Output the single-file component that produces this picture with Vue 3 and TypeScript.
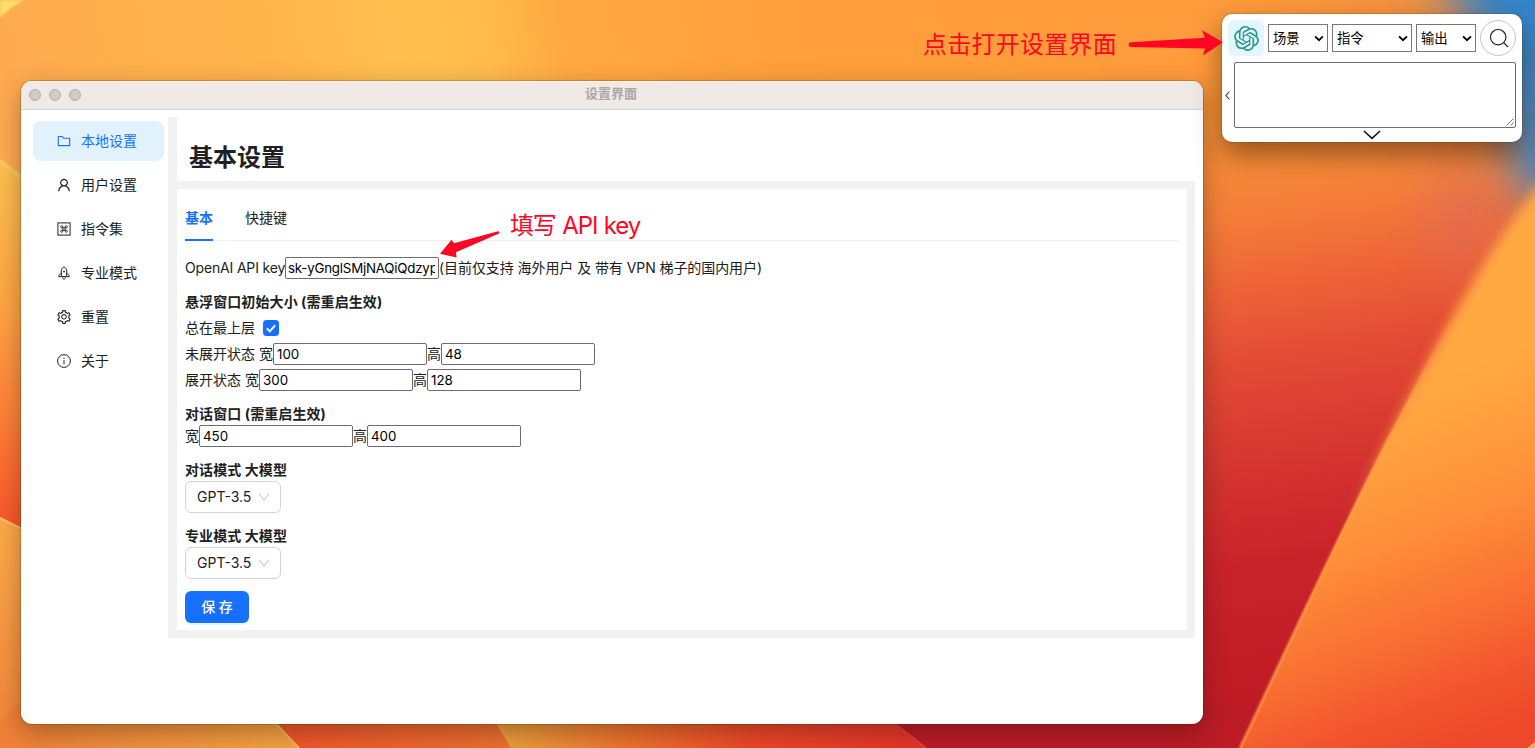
<script setup lang="ts">
import { ref } from 'vue'

interface MenuItem { key: string; label: string; icon: string }

const menu: MenuItem[] = [
  { key: 'local', label: '本地设置', icon: 'folder' },
  { key: 'user', label: '用户设置', icon: 'user' },
  { key: 'commands', label: '指令集', icon: 'command' },
  { key: 'pro', label: '专业模式', icon: 'rocket' },
  { key: 'reset', label: '重置', icon: 'gear' },
  { key: 'about', label: '关于', icon: 'info' },
]
const activeMenu = ref('local')
const tabs = ['基本', '快捷键']
const activeTab = ref('基本')

const apiKey = ref('sk-yGnglSMjNAQiQdzypLwTk')
const alwaysOnTop = ref(true)
const sizes = ref({ foldW: '100', foldH: '48', openW: '300', openH: '128', chatW: '450', chatH: '400' })
const pickers = [
  { label: '场景', size: 'small' },
  { label: '指令', size: 'large' },
  { label: '输出', size: 'small' },
]
const prompt = ref('')
</script>

<template>
  <div class="desktop">
    <svg class="wallpaper" viewBox="0 0 1535 748" preserveAspectRatio="none">
      <defs>
        <linearGradient id="top" x1="0" x2="1535" y1="0" y2="0" gradientUnits="userSpaceOnUse" gradientTransform="rotate(-8)">
          <stop offset="0" stop-color="#ffaa50" />
          <stop offset=".08" stop-color="#ffb04b" />
          <stop offset=".16" stop-color="#ffb34b" />
          <stop offset=".26" stop-color="#ffc04f" />
          <stop offset=".31" stop-color="#ffbb4b" />
          <stop offset=".36" stop-color="#ffa941" />
          <stop offset=".5" stop-color="#ff9f3b" />
          <stop offset=".8" stop-color="#ff9b3b" />
          <stop offset="1" stop-color="#ef8a44" />
        </linearGradient>
        <linearGradient id="red" x1="1203" x2="1290" y1="120" y2="700" gradientUnits="userSpaceOnUse">
          <stop offset="0" stop-color="#fb9038" />
          <stop offset=".16" stop-color="#f48039" />
          <stop offset=".3" stop-color="#ed6237" />
          <stop offset=".42" stop-color="#e34b35" />
          <stop offset=".58" stop-color="#d63731" />
          <stop offset=".76" stop-color="#c9232a" />
          <stop offset="1" stop-color="#c01a26" />
        </linearGradient>
        <linearGradient id="redFade" x1="0" x2="0" y1="60" y2="190" gradientUnits="userSpaceOnUse">
          <stop offset="0" stop-color="#fff" stop-opacity="0" />
          <stop offset="1" stop-color="#fff" />
        </linearGradient>
        <mask id="redMask"><rect width="1535" height="748" fill="url(#redFade)" /></mask>
        <linearGradient id="petal" x1="1390" x2="1515" y1="400" y2="725" gradientUnits="userSpaceOnUse">
          <stop offset="0" stop-color="#ffa943" />
          <stop offset=".35" stop-color="#ff913a" />
          <stop offset=".62" stop-color="#f97333" />
          <stop offset=".85" stop-color="#f2552e" />
          <stop offset="1" stop-color="#ed482b" />
        </linearGradient>
        <linearGradient id="left" x1="0" x2="0" y1="165" y2="525" gradientUnits="userSpaceOnUse">
          <stop offset="0" stop-color="#fec04e" />
          <stop offset=".4" stop-color="#ffa544" />
          <stop offset=".7" stop-color="#ff8038" />
          <stop offset="1" stop-color="#fb572b" />
        </linearGradient>
        <linearGradient id="leftLow" x1="0" x2="0" y1="520" y2="748" gradientUnits="userSpaceOnUse">
          <stop offset="0" stop-color="#ffab49" />
          <stop offset="1" stop-color="#ef843b" />
        </linearGradient>
        <linearGradient id="lowA" x1="0" x2="290" y1="0" y2="0" gradientUnits="userSpaceOnUse">
          <stop offset="0" stop-color="#f08039" />
          <stop offset="1" stop-color="#f7a444" />
        </linearGradient>
        <linearGradient id="lowB" x1="280" x2="510" y1="0" y2="0" gradientUnits="userSpaceOnUse">
          <stop offset="0" stop-color="#f2562c" />
          <stop offset="1" stop-color="#ef7133" />
        </linearGradient>
        <linearGradient id="lowC" x1="496" x2="920" y1="0" y2="0" gradientUnits="userSpaceOnUse">
          <stop offset="0" stop-color="#eda441" />
          <stop offset=".3" stop-color="#f0752f" />
          <stop offset=".6" stop-color="#ee482a" />
          <stop offset="1" stop-color="#e7352a" />
        </linearGradient>
        <filter id="b1"><feGaussianBlur stdDeviation="1" /></filter>
        <filter id="b5" x="-20%" y="-20%" width="140%" height="140%"><feGaussianBlur stdDeviation="6" /></filter>
        <filter id="b25" x="-60%" y="-60%" width="220%" height="220%"><feGaussianBlur stdDeviation="24" /></filter>
        <linearGradient id="softFade" x1="0" x2="0" y1="440" y2="520" gradientUnits="userSpaceOnUse">
          <stop offset="0" stop-color="#fff" />
          <stop offset="1" stop-color="#fff" stop-opacity="0" />
        </linearGradient>
        <mask id="softMask" maskUnits="userSpaceOnUse" x="1100" y="0" width="500" height="748"><rect x="1100" width="500" height="748" fill="url(#softFade)" /></mask>
        <linearGradient id="sharpFade" x1="0" x2="0" y1="300" y2="440" gradientUnits="userSpaceOnUse">
          <stop offset="0" stop-color="#fff" stop-opacity="0" />
          <stop offset="1" stop-color="#fff" />
        </linearGradient>
        <mask id="sharpMask" maskUnits="userSpaceOnUse" x="1100" y="0" width="500" height="748"><rect x="1100" width="500" height="748" fill="url(#sharpFade)" /></mask>
      </defs>
      <rect width="1535" height="748" fill="url(#top)" />
      <g mask="url(#redMask)"><rect x="1100" width="435" height="748" fill="url(#red)" /></g>
      <ellipse cx="1462" cy="215" rx="36" ry="60" fill="#d96a60" opacity=".5" filter="url(#b25)" />
      <path d="M1415 -70L1462 10L1498 90L1522 195L1640 220V-70Z" fill="#3585cb" filter="url(#b25)" />
      <path d="M0 18Q10 7 24 0H0Z" fill="#ffdf6b" filter="url(#b1)" />
      <path d="M0 161Q10 171 30 183V535L0 518Z" fill="url(#left)" />
      <path d="M0 160Q10 170 30 182" stroke="#ffd06b" stroke-width="3" fill="none" filter="url(#b1)" />
      <path d="M0 518L30 533V748H0Z" fill="url(#leftLow)" />
      <path d="M0 518L30 533" stroke="#ffc45d" stroke-width="2" />
      <path d="M21 700H264L299 748H0V724Z" fill="url(#lowA)" />
      <path d="M256 700L299 748H515L490 700Z" fill="url(#lowB)" />
      <path d="M253 700L299 748" stroke="#ffb85b" stroke-width="2" />
      <path d="M482 700L511 748H930L880 700Z" fill="url(#lowC)" />
      <path d="M864 700L926 748H1250V700Z" fill="#bd1b26" />
      <path d="M864 700L926 748" stroke="#e54334" stroke-width="2" />
      <g mask="url(#softMask)">
        <path d="M1560 160C1490 238 1441 338 1393 430C1338 535 1284 655 1240 748H1640V160Z" fill="url(#petal)" filter="url(#b5)" />
      </g>
      <g mask="url(#sharpMask)">
        <path d="M1560 160C1490 238 1441 338 1393 430C1338 535 1284 655 1240 748H1640V160Z" fill="url(#petal)" />
        <path d="M1560 160C1490 238 1441 338 1393 430C1338 535 1284 655 1240 748" fill="none" stroke="#ffa24c" stroke-width="2" filter="url(#b1)" />
      </g>
      <path d="M1527 748L1535 742V748Z" fill="#f3aa58" />
    </svg>

    <main class="window">
      <header class="titlebar">
        <span class="lights"><i /><i /><i /></span>
        <span class="caption">设置界面</span>
      </header>
      <div class="body">
        <nav class="menu">
          <a v-for="m in menu" :key="m.key" class="item" :class="{ active: m.key === activeMenu }" @click="activeMenu = m.key">
            <svg v-if="m.icon === 'folder'" viewBox="64 64 896 896" class="icon"><path d="M880 298.4H521L403.7 186.2a8.15 8.15 0 00-5.5-2.2H144c-17.7 0-32 14.3-32 32v592c0 17.7 14.3 32 32 32h736c17.7 0 32-14.3 32-32V330.4c0-17.7-14.3-32-32-32zM840 768H184V256h188.5l119.6 114.4H840V768z" /></svg>
            <svg v-else-if="m.icon === 'user'" viewBox="64 64 896 896" class="icon"><path d="M858.5 763.6a374 374 0 00-80.6-119.5 375.63 375.63 0 00-119.5-80.6c-.4-.2-.8-.3-1.2-.5C719.5 518 760 444.7 760 362c0-137-111-248-248-248S264 225 264 362c0 82.7 40.5 156 102.8 201.1-.4.2-.8.3-1.2.5-44.8 18.9-85 46-119.5 80.6a375.63 375.63 0 00-80.6 119.5A371.7 371.7 0 00136 901.8a8 8 0 008 8.2h60c4.4 0 7.9-3.5 8-7.8 2-77.2 33-149.5 87.8-204.3 56.7-56.7 132-87.9 212.2-87.9s155.5 31.2 212.2 87.9C779 752.7 810 825 812 902.2c.1 4.4 3.6 7.8 8 7.8h60a8 8 0 008-8.2c-1-47.8-10.9-94.3-29.5-138.2zM512 534c-45.9 0-89.1-17.9-121.6-50.4S340 407.9 340 362c0-45.9 17.9-89.1 50.4-121.6S466.1 190 512 190s89.1 17.9 121.6 50.4S684 316.1 684 362c0 45.9-17.9 89.1-50.4 121.6S557.9 534 512 534z" /></svg>
            <svg v-else-if="m.icon === 'command'" viewBox="0 0 14 14" class="icon line"><rect x=".9" y=".9" width="12.2" height="12.2" /><path d="M5.8 5.8h2.4v2.4H5.8zM5.8 5.8H4.7a1.05 1.05 0 1 1 1.1-1.1zM8.2 5.8V4.7a1.05 1.05 0 1 1 1.1 1.1zM8.2 8.2h1.1a1.05 1.05 0 1 1-1.1 1.1zM5.8 8.2v1.1a1.05 1.05 0 1 1-1.1-1.1z" stroke-width=".9" /></svg>
            <svg v-else-if="m.icon === 'rocket'" viewBox="0 0 14 14" class="icon line"><path d="M4.3 10.6V4.8C4.3 3.2 5.3 1.8 7 .8c1.7 1 2.7 2.4 2.7 4v5.8zM4.3 7.2C2.7 8 1.8 9.2 1.7 10.6h2.6M9.7 7.2c1.6.8 2.5 2 2.6 3.4H9.7M5.7 11.3c.1 1 .6 1.7 1.3 2.2.7-.5 1.2-1.2 1.3-2.2" /><circle cx="7" cy="5.6" r=".6" /></svg>
            <svg v-else-if="m.icon === 'gear'" viewBox="64 64 896 896" class="icon"><path d="M924.8 625.7l-65.5-56c3.1-19 4.7-38.4 4.7-57.8s-1.6-38.8-4.7-57.8l65.5-56a32.03 32.03 0 009.3-35.2l-.9-2.6a443.74 443.74 0 00-79.7-137.9l-1.8-2.1a32.12 32.12 0 00-35.1-9.5l-81.3 28.9c-30-24.6-63.5-44-99.7-57.6l-15.7-85a32.05 32.05 0 00-25.8-25.7l-2.7-.5c-52.1-9.4-106.9-9.4-159 0l-2.7.5a32.05 32.05 0 00-25.8 25.7l-15.8 85.4a351.86 351.86 0 00-99 57.4l-81.9-29.1a32 32 0 00-35.1 9.5l-1.8 2.1a446.02 446.02 0 00-79.7 137.9l-.9 2.6c-4.5 12.5-.8 26.5 9.3 35.2l66.3 56.6c-3.1 18.8-4.6 38-4.6 57.1 0 19.2 1.5 38.4 4.6 57.1L99 625.5a32.03 32.03 0 00-9.3 35.2l.9 2.6c18.1 50.4 44.9 96.9 79.7 137.9l1.8 2.1a32.12 32.12 0 0035.1 9.5l81.9-29.1c29.8 24.5 63.1 43.9 99 57.4l15.8 85.4a32.05 32.05 0 0025.8 25.7l2.7.5a449.4 449.4 0 00159 0l2.7-.5a32.05 32.05 0 0025.8-25.7l15.7-85a350 350 0 0099.7-57.6l81.3 28.9a32 32 0 0035.1-9.5l1.8-2.1c34.8-41.1 61.6-87.5 79.7-137.9l.9-2.6c4.5-12.3.8-26.3-9.3-35zM788.3 465.9c2.5 15.1 3.8 30.6 3.8 46.1s-1.3 31-3.8 46.1l-6.6 40.1 74.7 63.9a370.03 370.03 0 01-42.6 73.6L721 702.8l-31.4 25.8c-23.9 19.6-50.5 35-79.3 45.8l-38.1 14.3-17.9 97a377.5 377.5 0 01-85 0l-17.9-97.2-37.8-14.5c-28.5-10.8-55-26.2-78.7-45.7l-31.4-25.9-93.4 33.2c-17-22.9-31.2-47.6-42.6-73.6l75.5-64.5-6.5-40c-2.4-14.9-3.7-30.3-3.7-45.5 0-15.3 1.2-30.6 3.7-45.5l6.5-40-75.5-64.5c11.3-26.1 25.6-50.7 42.6-73.6l93.4 33.2 31.4-25.9c23.7-19.5 50.2-34.9 78.7-45.7l37.9-14.3 17.9-97.2c28.1-3.2 56.8-3.2 85 0l17.9 97 38.1 14.3c28.7 10.8 55.4 26.2 79.3 45.8l31.4 25.8 92.8-32.9c17 22.9 31.2 47.6 42.6 73.6L781.8 426l6.5 39.9zM512 326c-97.2 0-176 78.8-176 176s78.8 176 176 176 176-78.8 176-176-78.8-176-176-176zm79.2 255.2A111.6 111.6 0 01512 614c-29.9 0-58-11.7-79.2-32.8A111.6 111.6 0 01400 502c0-29.9 11.7-58 32.8-79.2C454 401.6 482.1 390 512 390c29.9 0 58 11.6 79.2 32.8A111.6 111.6 0 01624 502c0 29.9-11.7 58-32.8 79.2z" /></svg>
            <svg v-else viewBox="0 0 14 14" class="icon line"><circle cx="7" cy="7" r="6.4" /><path d="M7 6.1v4.2M7 3.7v1.3" /></svg>
            <span>{{ m.label }}</span>
          </a>
        </nav>

        <section class="panel">
          <h1>基本设置</h1>
          <div class="content">
            <div class="tabs">
              <span v-for="t in tabs" :key="t" class="tab" :class="{ on: t === activeTab }" @click="activeTab = t">{{ t }}</span>
            </div>
            <div class="row"><span class="api">OpenAI API key</span><input v-model="apiKey" class="key"><span class="note">(目前仅支持 海外用户 及 带有 VPN 梯子的国内用户)</span></div>

            <div class="group spaced">
              <h3>悬浮窗口初始大小 (需重启生效)</h3>
              <label class="row">总在最上层
                <input v-model="alwaysOnTop" class="native-check" type="checkbox">
                <svg class="check" viewBox="0 0 16 16"><rect width="16" height="16" rx="3.5" /><path v-if="alwaysOnTop" d="M3.8 8.4l3 3 5.3-6" /></svg>
              </label>
              <div class="row"><span class="lead">未展开状态 宽</span><input v-model="sizes.foldW"><span class="hi">高</span><input v-model="sizes.foldH"></div>
              <div class="row"><span class="lead short">展开状态 宽</span><input v-model="sizes.openW"><span class="hi">高</span><input v-model="sizes.openH"></div>
            </div>

            <div class="group">
              <h3>对话窗口 (需重启生效)</h3>
              <div class="row"><span class="hi">宽</span><input v-model="sizes.chatW"><span class="hi">高</span><input v-model="sizes.chatH"></div>
            </div>

            <div v-for="g in ['对话模式 大模型', '专业模式 大模型']" :key="g" class="group">
              <h3>{{ g }}</h3>
              <button class="select">GPT-3.5<svg viewBox="0 0 12 12"><path d="M1.2 2.6L6 9.2l4.8-6.6" /></svg></button>
            </div>
            <button class="save">保 存</button>
          </div>
        </section>
      </div>
    </main>

    <aside class="floater">
      <div class="toolbar">
        <button class="logo"><svg viewBox="0 0 24 24"><path d="M22.2819 9.8211a5.9847 5.9847 0 0 0-.5157-4.9108 6.0462 6.0462 0 0 0-6.5098-2.9A6.0651 6.0651 0 0 0 4.9807 4.1818a5.9847 5.9847 0 0 0-3.9977 2.9 6.0462 6.0462 0 0 0 .7427 7.0966 5.98 5.98 0 0 0 .511 4.9107 6.051 6.051 0 0 0 6.5146 2.9001A5.9847 5.9847 0 0 0 13.2599 24a6.0557 6.0557 0 0 0 5.7718-4.2058 5.9894 5.9894 0 0 0 3.9977-2.9001 6.0557 6.0557 0 0 0-.7475-7.0729zm-9.022 12.6081a4.4755 4.4755 0 0 1-2.8764-1.0408l.1419-.0804 4.7783-2.7582a.7948.7948 0 0 0 .3927-.6813v-6.7369l2.02 1.1686a.071.071 0 0 1 .038.052v5.5826a4.504 4.504 0 0 1-4.4945 4.4944zm-9.6607-4.1254a4.4708 4.4708 0 0 1-.5346-3.0137l.142.0852 4.783 2.7582a.7712.7712 0 0 0 .7806 0l5.8428-3.3685v2.3324a.0804.0804 0 0 1-.0332.0615L9.74 19.9502a4.4992 4.4992 0 0 1-6.1408-1.6464zM2.3408 7.8956a4.485 4.485 0 0 1 2.3655-1.9728V11.6a.7664.7664 0 0 0 .3879.6765l5.8144 3.3543-2.0201 1.1685a.0757.0757 0 0 1-.071 0l-4.8303-2.7865A4.504 4.504 0 0 1 2.3408 7.872zm16.5963 3.8558L13.1038 8.364 15.1192 7.2a.0757.0757 0 0 1 .071 0l4.8303 2.7913a4.4944 4.4944 0 0 1-.6765 8.1042v-5.6772a.79.79 0 0 0-.407-.667zm2.0107-3.0231l-.142-.0852-4.7735-2.7818a.7759.7759 0 0 0-.7854 0L9.409 9.2297V6.8974a.0662.0662 0 0 1 .0284-.0615l4.8303-2.7866a4.4992 4.4992 0 0 1 6.6802 4.66zM8.3065 12.863l-2.02-1.1638a.0804.0804 0 0 1-.038-.0567V6.0742a4.4992 4.4992 0 0 1 7.3757-3.4537l-.142.0805L8.704 5.459a.7948.7948 0 0 0-.3927.6813zm1.0976-2.3654l2.602-1.4998 2.6069 1.4998v2.9994l-2.5974 1.4997-2.6067-1.4997Z" /></svg></button>
        <button v-for="p in pickers" :key="p.label" class="picker" :class="p.size">{{ p.label }}<svg viewBox="0 0 10 7"><path d="M1.1 1.3L5 5.2l3.9-3.9" /></svg></button>
        <button class="search"><svg viewBox="0 0 20 20"><circle cx="9.2" cy="9.2" r="7.7" /><path d="M14.7 14.7L19 19" /></svg></button>
      </div>
      <div class="compose">
        <svg class="back" viewBox="0 0 5 9"><path d="M4.5.5L.9 4.5l3.6 4" /></svg>
        <div class="area"><textarea v-model="prompt" /><svg class="grip" viewBox="0 0 8 8"><path d="M.5 7.5l7-7M4.5 7.5l3-3" /></svg></div>
      </div>
      <svg class="expand" viewBox="0 0 18 10"><path d="M1 1l8 7.4L17 1" /></svg>
    </aside>

    <span class="callout open">点击打开设置界面</span>
    <span class="callout fill">填写 API key</span>
    <svg class="arrows" viewBox="0 0 1535 748"><path d="M1131 42.3L1205 37.8L1202 30.3L1223 42.3L1203 55.5L1205 48.5L1131 47A2.3 2.3 0 0 1 1131 42.3ZM498 231.2L454 243.2L451.5 239.8L440 253.8L456.5 257.5L456 252.2L498.5 233.8A1.4 1.4 0 0 0 498 231.2Z" /></svg>
  </div>
</template>

<style>
html, body { margin: 0; overflow: hidden; }
</style>

<style scoped>
.desktop { position: relative; width: 1535px; height: 748px; overflow: hidden; font: 14px/22px Inter, "Noto Sans CJK SC", sans-serif; color: #202020; }
.desktop * { box-sizing: border-box; }
.wallpaper, .arrows { position: absolute; inset: 0; width: 1535px; height: 748px; }
.arrows { fill: #ff0624; pointer-events: none; }
button, input, textarea { font-family: inherit; margin: 0; }
button { padding: 0; border: 0; background: #fff; color: inherit; }

.window { position: absolute; left: 21px; top: 81px; width: 1182px; height: 643px; border-radius: 11px; background: #fff; overflow: hidden; box-shadow: 0 0 0 1px rgba(70, 30, 0, .22), 0 9px 26px rgba(40, 20, 0, .36); }
.titlebar { display: grid; grid-template-columns: 1fr auto 1fr; align-items: center; height: 29px; padding-right: 2px; background: #efeae6; border-bottom: 1px solid #d4d0cd; box-shadow: inset 0 1px #f8f5f3; }
.lights { display: flex; gap: 8px; padding-left: 8px; }
.lights i { width: 12px; height: 12px; border-radius: 50%; background: #d0cbc7; border: 1px solid #b1adaa; }
.caption { font-size: 13px; font-weight: 700; color: #aca7a4; line-height: 20px; margin-top: -4px; }
.body { display: flex; padding-top: 7px; }
.menu { display: flex; flex-direction: column; gap: 4px; width: 147px; padding: 4px 4px 0 12px; }
.item { display: flex; align-items: center; gap: 10px; height: 40px; padding-left: 24px; border-radius: 8px; }
.item.active { background: #e1f2fd; color: #1870ff; }
.icon { width: 14px; height: 14px; fill: currentColor; flex: none; }
.line { fill: none; stroke: currentColor; stroke-width: 1; }
.panel { width: 1027px; height: 521px; padding: 0 0 8px 9px; background: #f2f2f2; }
h1 { margin: 0; height: 64px; padding: 23px 0 0 12px; background: #fff; font-size: 24px; line-height: 36px; font-weight: 700; }
.content { width: 1010px; height: 441px; margin-top: 8px; padding: 8px; background: #fff; }
.tabs { display: flex; gap: 32px; height: 44px; box-shadow: inset 0 -1px #eee; margin-bottom: 16px; }
.tab { padding-top: 10px; }
.tab.on { color: #1870ff; font-weight: 700; border-bottom: 2px solid #1870ff; width: 28px; }
.row { display: flex; align-items: center; height: 22px; white-space: nowrap; }
.row input:not([type]) { width: 154px; height: 22px; flex: none; padding: 0 2px 0 3px; border: 1px solid #6d6d6d; border-radius: 2px; outline: 0; font-size: 13.33px; background: #fff; color: #000; }
.row input.key { letter-spacing: -.22px; padding-left: 2px; padding-right: 3px; }
.api { width: 100px; letter-spacing: -.17px; }
.note { letter-spacing: -.07px; }
.lead { width: 88px; }
.lead.short { width: 74px; }
.hi { width: 14px; }
.group { margin-top: 12px; }
h3 { margin: 0; font-size: 14px; line-height: 22px; font-weight: 700; letter-spacing: .09px; white-space: nowrap; }
.spaced .row { margin-top: 4px; }
.native-check { appearance: none; width: 0; height: 0; }
.check { width: 16px; height: 16px; margin-left: 8px; fill: #1870ff; }
.check path { fill: none; stroke: #fff; stroke-width: 2; }
.select { display: flex; align-items: center; justify-content: space-between; width: 96px; height: 32px; padding: 0 10px 1px 11px; border: 1px solid #d3d3d3; border-radius: 6px; font-size: 14px; }
.select svg { width: 12px; height: 12px; fill: none; stroke: #bfbfbf; stroke-width: 1; }
.save { display: block; width: 64px; height: 32px; margin-top: 12px; padding-bottom: 2px; border-radius: 6px; background: #1870ff; color: #fff; font-size: 14px; font-weight: 500; box-shadow: 0 2px 0 rgba(5, 145, 255, .1); }

.floater { position: absolute; left: 1222px; top: 14px; width: 300px; height: 128px; padding: 6px; background: #fff; border-radius: 10px; box-shadow: 0 0 0 1px rgba(60, 30, 0, .15), 0 12px 28px rgba(40, 20, 0, .5); display: flex; flex-direction: column; }
.toolbar { display: flex; align-items: center; gap: 4px; height: 36px; }
.logo { display: grid; place-items: center; width: 36px; height: 36px; border-radius: 6px; background: #e3f6fe; }
.logo svg { width: 25px; height: 25px; fill: #2b998b; }
.picker { display: flex; align-items: center; justify-content: space-between; width: 60px; height: 28px; padding: 0 3px 1px 4px; border: 1px solid #767676; font-size: 13.33px; color: #000; }
.picker.large { width: 80px; }
.picker svg { width: 10px; height: 7px; margin-top: 1px; fill: none; stroke: #000; stroke-width: 1.8; }
.search { display: grid; place-items: center; width: 36px; height: 36px; padding-left: 1px; border: 1px solid #c4c4c4; border-radius: 50%; }
.search svg { width: 20px; height: 20px; fill: none; stroke: #222; stroke-width: 1.2; }
.compose { display: flex; align-items: center; gap: 4px; margin: 6px 0 0 -3px; }
.back { width: 5px; height: 9px; fill: none; stroke: #333; stroke-width: 1.1; flex: none; }
.area { position: relative; width: 282px; height: 66px; }
textarea { display: block; width: 282px; height: 66px; border: 1px solid #6d6d6d; border-radius: 2px; resize: none; outline: 0; background: #fff; }
.grip { position: absolute; right: 2px; bottom: 2px; width: 8px; height: 8px; fill: none; stroke: #555; stroke-width: .8; }
.expand { width: 18px; height: 10px; margin: 2px 0 0 135px; fill: none; stroke: #111; stroke-width: 1.5; flex: none; }
.callout { position: absolute; color: #ff0624; font-size: 24px; line-height: 32px; white-space: nowrap; }
.open { left: 923px; top: 29px; letter-spacing: .25px; }
.fill { left: 510px; top: 210px; letter-spacing: -1.15px; word-spacing: 1px; }
</style>
